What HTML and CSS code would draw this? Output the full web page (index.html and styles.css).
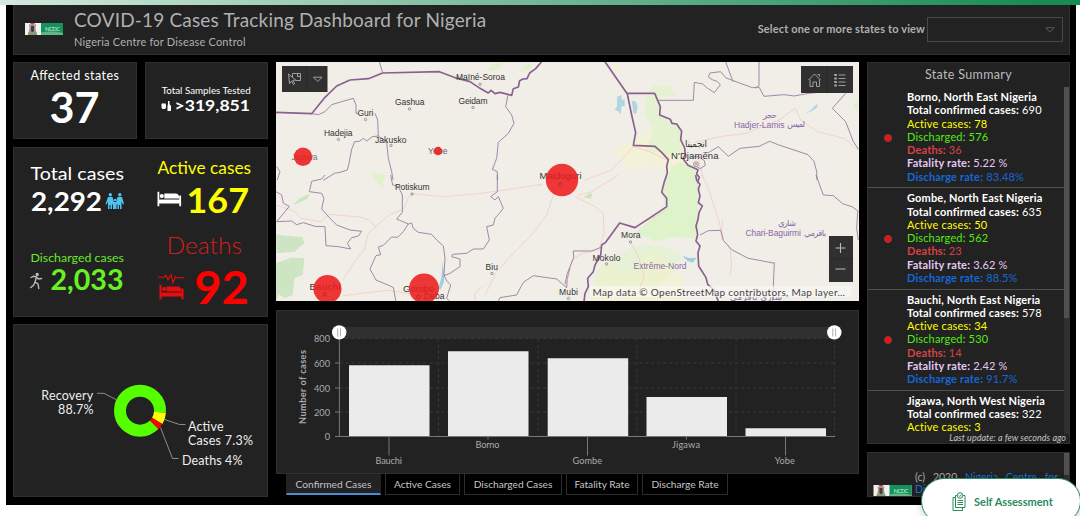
FILE: index.html
```html
<!DOCTYPE html>
<html lang="en">
<head>
<meta charset="utf-8">
<title>COVID-19 Cases Tracking Dashboard for Nigeria</title>
<link rel="stylesheet" href="styles.css">
</head>
<body>
<svg class="defs" width="0" height="0">
  <symbol id="logo" viewBox="0 0 38 12">
    <rect width="38" height="12" fill="#f4f2f0"/>
    <rect x="16" width="22" height="12" fill="#17905c"/>
    <path d="M16 9.500q11-2 22 .5v2H16z" fill="#62b68b"/>
    <path d="M4 1l2 1 1.500-1.500L9 2l2-1-.5 4 1 5H3.500l1-5z" fill="#a39590"/>
    <path d="M6 3h3v5l-1.500 1.500L6 8z" fill="#463c3b"/>
    <path d="M5.500 0h4v1.500h-4z" fill="#c44444"/>
    <path d="M3 9.500h9V12H3z" fill="#7ea070"/>
    <text x="20" y="7.500" font-size="6" font-weight="700" textLength="15" fill="#9fdcbb">NCDC</text>
  </symbol>
  <symbol id="bed" viewBox="0 0 24 15">
    <path d="M0 0h2v8h20V4h2v11h-2v-3H2v3H0zM7 2h11q4 0 4 5H7z"/><circle cx="4.500" cy="4.600" r="2.100"/>
  </symbol>
</svg>
<div class="topbar"></div>
<main class="dashboard">
  <header class="header panel">
    <svg class="brand" width="38" height="12"><use href="#logo"/></svg>
    <div class="titles">
      <h1>COVID-19 Cases Tracking Dashboard for Nigeria</h1>
      <p>Nigeria Centre for Disease Control</p>
    </div>
    <label class="picker-label">Select one or more states to view</label>
    <div class="picker"><svg width="10" height="6" viewBox="0 0 10 6"><path d="M.8.7h8.400L5 5.200z" fill="none" stroke="#5b5b5b"/></svg></div>
  </header>

  <div class="columns">
    <section class="left">
      <div class="pair">
        <div class="panel"><svg width="122" height="75" viewBox="14 63 122 75" class="stat">
          <text x="30.500" y="79.500" font-size="12.500" textLength="88.500">Affected states</text>
          <text x="49.500" y="123.300" font-size="42" textLength="50" lengthAdjust="spacingAndGlyphs" class="b">37</text>
        </svg></div>
        <div class="panel"><svg width="121" height="75" viewBox="146 63 121 75" class="stat">
          <text x="161.700" y="93.700" font-size="9.500" textLength="89" lengthAdjust="spacingAndGlyphs">Total Samples Tested</text>
          <path d="M161.500 104l1.500-1 1 1 1-1 1 1.500v3l-1 1.500h-2.500l-1-1.500zM168 101h1.500v3l1.500 2v5h-3.500v-5l.5-2z"/>
          <text x="174.500" y="111.300" font-size="15" textLength="75.500" lengthAdjust="spacingAndGlyphs" class="b">&gt;319,851</text>
        </svg></div>
      </div>
      <div class="panel"><svg width="253" height="168" viewBox="14 148 253 168" class="stat">
        <text x="30.500" y="180.300" font-size="18" textLength="93.500" lengthAdjust="spacingAndGlyphs">Total cases</text>
        <text x="31" y="211" font-size="26" textLength="71" lengthAdjust="spacingAndGlyphs" class="b">2,292</text>
        <g fill="#4fc3ee"><circle cx="110.300" cy="194.800" r="1.700"/><circle cx="119.800" cy="194.800" r="1.700"/><circle cx="115.200" cy="200" r="1.300"/>
          <path d="M108 197h4.500l1.500 5h2.200l1.300-5h4.500l2 7-1 .5-1.500-3v7.500h-1.500v-4h-1v4h-1.500v-5l-1 1v4h-3.500v-4l-1-1v5h-1.500v-4h-1v4H108V201.500l-1.500 3-1-.5z"/></g>
        <text x="157.500" y="174.300" font-size="17" fill="#ffff00" textLength="93.500" lengthAdjust="spacingAndGlyphs">Active cases</text>
        <use href="#bed" x="157.300" y="191.500" width="24" height="15"/>
        <text x="186.500" y="213" font-size="35" fill="#ffff00" textLength="62.500" lengthAdjust="spacingAndGlyphs" class="b">167</text>
        <text x="30.500" y="261.500" font-size="12" fill="#6be82c" textLength="93.500" lengthAdjust="spacingAndGlyphs">Discharged cases</text>
        <g fill="none" stroke="#bbb" stroke-width="1.400" stroke-linecap="round"><circle cx="37.200" cy="274.400" r="1" fill="#bbb"/><path d="M36.500 277l-1.500 5 3 2 .8 4.500M35 282l-1.500 3.200-2.800 2.300M31 277.500l2.500-1.300 3 .8 2 2 3-.500"/></g>
        <text x="50.500" y="290.300" font-size="28" fill="#69f222" textLength="73" lengthAdjust="spacingAndGlyphs" class="b">2,033</text>
        <text x="166.500" y="253.700" font-size="23" font-weight="300" fill="#d81c1c" textLength="75.500" lengthAdjust="spacingAndGlyphs">Deaths</text>
        <g fill="#e80c0c"><use href="#bed" x="158" y="284.500" width="27" height="15"/><path d="M158 277.200h6l2-2 2 4.500 3-5 2 8 2.500-6 1.500 1h7" fill="none" stroke="#e80c0c" stroke-width="1.100"/></g>
        <text x="194.300" y="304" font-size="46" fill="#ff0000" textLength="54.500" lengthAdjust="spacingAndGlyphs" class="b">92</text>
      </svg></div>
      <div class="panel"><svg width="253" height="171" viewBox="14 325 253 171" class="stat pie">
        <g fill="none" stroke-width="12">
          <circle cx="140" cy="410.700" r="20" pathLength="100" stroke="#55ff00" stroke-dasharray="88.700 11.300" transform="rotate(45 140 410.700)"/>
          <circle cx="140" cy="410.700" r="20" pathLength="100" stroke="#ffff00" stroke-dasharray="7.300 92.700" transform="rotate(4.300 140 410.700)"/>
          <circle cx="140" cy="410.700" r="20" pathLength="100" stroke="#ff0000" stroke-dasharray="4 96" transform="rotate(30.600 140 410.700)"/>
        </g>
        <path d="M97 393.300h7l12.500 6.500M164.500 419.500l15 5h6M160.500 427.500l12 31h6" fill="none" stroke="#999" stroke-width=".9"/>
        <text x="41.300" y="400" textLength="52">Recovery</text><text x="58" y="414" textLength="35.500">88.7%</text>
        <text x="188" y="430.700" textLength="35.500">Active</text><text x="188" y="444.500" textLength="65">Cases 7.3%</text>
        <text x="182" y="464.700" textLength="60.500">Deaths 4%</text>
      </svg></div>
    </section>

    <section class="center">
      <div class="map"><svg width="583" height="239" viewBox="276 62 583 239">
        <g transform="translate(270 55) scale(.33333)">
          <path class="green" d="M655 43l20-20h24l-12 18-30 10zM750 48l12-14 25-10-8 20zM308 358l22-6 10 10-18 13h-10z"/>
          <path class="country" d="M18 172l107 4 40-49 35-34 40-18 55-4 43-17 170-4 44 17 48 13 30 20 25 14 8-8 12 10 15-4 35 9 5-20 15-5 4-19 10-5 12-1 8-17 18-13 12-14 10-12"/>
          <path class="state" d="M328 20l10 34M125 176l20 3 20-9 20-21 30-9 35-10 8 20v25l8 2M315 175l8 20 2 48-18 2-17 13-10-8-12 9-14 1-9 23-8 42-5 20-25 8-12 1-35 22M325 243l25 17 5 50 10 40 4 25M714 120l-7 35 18 25 7 25-17 30-30 27-5 48-13 33 15 7v25M20 335l10 14-8 26"/>
        </g>
        <g transform="translate(270 175) scale(.33333)">
          <path class="forest" d="M18 178l30 4 50 5 5 18-30 25-53 5zM18 265l45-17 40 2-5 50-25 10-5 50-25 10-15-12-10 20-20-5zM68 90l22-20 28-14-6 15-25 12z"/><path class="green" d="M308 5l12-5h26l-10 38z"/>
          <path class="water" d="M518 260l5 40-1 22-12 24-4-8 8-30z"/>
          <path class="road" d="M18 90l55 18 20 22 60 10 22-22 95 8 30 10 17 20-23 20-10 45-35 45-30 50M315 156l45-38 25-9 15-5 15-35 12-13 60 6 40 3 90-8 50-7 150-22M850 60l-20 60-45 60-50 50-55 60-35 70M218 362l135-16 65 10M635 335l-20 20v23"/>
          <path class="state" d="M165 0l-10 12-30 7-7 31 37 5 7 15-7 32 25 28 20 20 40 15 35 4-10 14-20 5-13 17 10 17-37-7-37-3-3-57-30-1-35-11-20 6-15-11-45 2M18 50l17 10 5 25 18 9-38 46M362 0l6 30 17 5 12 25v52l-17 20 35 15-15 23-17 17-18-1-25 25-15 5 7 23-14 3-18 40 18 33 52 22 8 44M415 147l10-3 5 16 15 12 40 6 15 17 20 18 5 37-3 52 18-7 30-20v-23l-25-7 3-7 42-3 20-13h30l18-27-8-40 20-5 5-20 13-15 12-15-15-35-10 10-13-10 20-15V0M522 302l10 18 10 10-12 40 10 10M685 378l5-10 50-8 20-38 30-20 70 10 30 26 2-28 8-30"/>
        </g>
        <g transform="translate(565 55) scale(.33333)">
          <path class="yellow" d="M140 30l20-7 8 25h-20zM135 285l50-15 75-50 60 30 40 60-20 60-80-40-60 20z" opacity=".5"/>
          <path class="green" opacity=".75" d="M240 118l30-28 45 3 20 30-53 5 8 52 30 15 15 14 18 35-2 45-40 10-70-15 25-60-30-50 10-40z"/>
          <path class="green" d="M318 335l30-12 45 18v38h-85z"/>
          <path class="water" d="M156 125l14-5v15l9-2v22l-9-3-3 26-8-10-10-3 7-12zM200 137l12 2 6 16-5 23-8-5zM705 185l20-10 30-25v10l-20 10zM745 155l13-8-2 10z" opacity=".8"/>
          <path class="road" d="M60 375l80-30 65-70 50 15 50 25M390 262l80-18 70-8 100-40 52-36 15 35 50 35 80 20 35 30 45 23M400 310l15 60"/>
          <path class="country" d="M120 20l67 97 13 63 12 53-7 38 65 3 20 18 20 22-5 20 2 18-5 23M187 115h82l17 40-2 25 32 13 5 12 14 2 15 22-3 25 12 25 2 20-7 12 15 20 30 13-4 13 8 10-8 20"/>
          <path class="state" d="M275 136h110l3-54 25 5 15 13 20 13 18-24-10-10-14-5-12-8 5-12 32-4 15 18 20 8 60 22 20-2 15 28 60-5 30 4 45-8 40-4M482 20l22 60M582 20v72l-10 8M842 115l-40 45 40 40 23 60 15 22M415 293h15l30-18 30 29 35-24 57-6 32-15 25 10 90 30 18 20 8 30 1 26M380 306l20-1 18 12 3 14-15 10-15-9"/>
          <path class="green" d="M866 145l13-5v25l-12-5z"/>
        </g>
        <g transform="translate(565 175) scale(.33333)">
          <path class="green" d="M305 0h80l15 30-2 50 4 60-4 50-75-5-50 15-30-15-35-10 55-45 40-30-5-20-5-20z"/>
          <path class="green" opacity=".6" d="M90 290l70-50 50-30 80 0 60 30-30 60-70 50-100-20-60 20z"/>
          <path class="yellow" d="M80 340l40-80 70 30 80-70 90 90-10 68H80z" opacity=".45"/>
          <path class="forest" d="M55 67l20-14 8 4-6 14z"/><path class="water" d="M352 242l20 7 23-1-12 15-16-5z"/>
          <path class="road" d="M40 60l40-10 80-50M30 65l60 30 25 20 2 60-15 50-50 10-30 20-8 30-10 45M200 160l80-40 25-20M198 205l20 35 20 60-20 60M410 0l20 40 35 110 5 40 25 30 5 50-5 30M470 165l3-30M0 15l30 10"/>
          <path class="country" d="M305 0l-7 20-8 32 15 18v25l-30 20-65 43-46-14-42 58-12 8-3 30-17 30-5 20-17 20 2 25-10 20-5 43M392 0l3 16 10 12-5 15 5 20-5 20 12 10-10 20-3 20-6 20 5 25-5 20 12 15-6 20 2 40 22 35 5 20 17 15 15 35"/>
          <path class="state" d="M405 180l25-13 38-1 7 30 25 28 50 26 75 14 3-1-5 115M753 0l22 60 30 2 28 24 30 10 18 14M878 110l-3 50 5 35M110 216l-30 12-55 0 1 20-20 50-6 30"/>
        </g>
        <g fill="#f1eee8" stroke="#777" stroke-width=".7"><circle cx="365.500" cy="119.500" r="1.200"/><circle cx="409.500" cy="109" r="1.200"/><circle cx="473" cy="107.500" r="1.200"/><circle cx="480" cy="84.300" r="1.200"/><circle cx="338.500" cy="139.500" r="1.200"/><circle cx="391" cy="145.500" r="1.200"/><circle cx="412" cy="194" r="1.200"/><circle cx="492" cy="273.500" r="1.200"/><circle cx="630.500" cy="242" r="1.200"/><circle cx="606.500" cy="264" r="1.200"/><circle cx="696" cy="164.300" r="2.500"/><circle cx="696" cy="164.300" r=".8"/><circle cx="568.500" cy="298.500" r="1.200"/></g>
        <g class="places">
          <text x="456" y="80.200" textLength="49">Maïné-Soroa</text><text x="395" y="105" textLength="29.500">Gashua</text><text x="458.500" y="103.700" textLength="29">Geidam</text>
          <text x="357.500" y="115.500" textLength="16">Guri</text><text x="324" y="136" textLength="28.500">Hadejia</text><text x="375" y="142.500" textLength="31.500">Jakusko</text>
          <text x="395" y="190" textLength="34.500">Potiskum</text><text x="485.500" y="269.500" textLength="12.500">Biu</text><text x="621" y="238" textLength="19.500">Mora</text><text x="592.500" y="260.500" textLength="28">Mokolo</text>
          <text x="559" y="295" textLength="19">Mubi</text><text x="671" y="158.500" font-size="9.500" textLength="47.500">N'Djaména</text><text x="685" y="146.500" font-size="9" textLength="22">انجمينا</text>
          <text x="291.500" y="159.500" fill="#777" textLength="26">Jigawa</text><text x="428" y="154" fill="#666" textLength="19.500">Yobe</text><text x="539.500" y="178.500" font-size="9.500" textLength="42">Maiduguri</text><text x="309.500" y="289.500" font-size="9.500" textLength="31">Bauchi</text><text x="403" y="291.500" font-size="9.500" textLength="31.500">Gombe</text><text x="424" y="299" textLength="20.500">Deba</text>
          <g fill="#8968a5"><text x="734" y="127.500" textLength="50.500">Hadjer-Lamis</text><text x="787" y="127" textLength="18">لميس</text><text x="763" y="118" textLength="14">حجر</text><text x="745.500" y="236.200" textLength="55.500">Chari-Baguirmi</text><text x="804" y="236" textLength="22">باقرمي</text><text x="778" y="226" textLength="18">شاري</text><text x="633.500" y="268.500" textLength="53">Extrême-Nord</text><text x="730" y="300" textLength="52">شاري باقرمي</text></g>
        </g>
        <g class="marks"><circle cx="303" cy="156.700" r="9.200"/><circle cx="438" cy="151" r="4.200"/><circle cx="562" cy="180" r="16.200"/><circle cx="327.500" cy="289" r="14"/><circle cx="424" cy="288.500" r="15"/></g>
        <g fill="none" stroke="#b52525" stroke-width=".8"><circle cx="324.500" cy="294.500" r="1.600"/><circle cx="418.500" cy="297" r="1.800"/><circle cx="560.500" cy="184.500" r="1.800"/></g>
        <rect x="590" y="286" width="261" height="11" fill="#f8f6f2" opacity=".72"/>
        <text x="592.500" y="295.500" class="credit" textLength="252.500">Map data © OpenStreetMap contributors, Map layer…</text>
        <g fill="#303030"><rect x="282" y="66" width="45.500" height="26"/><rect x="801" y="66" width="52" height="27"/><rect x="829" y="236" width="24" height="46"/></g>
        <path d="M306.500 66v26M827 66v27M829 259h24" stroke="#292929"/>
        <g fill="none" stroke="#aaa" stroke-width=".9"><path d="M292.500 77v-3.500h8v7h-5M297.500 73.500v3h3M288.500 74l1 9.500 2-2.500 2 3.500 1.200-.7-2-3.300 3-.5zM313.500 77.200h8.500l-4.200 4.300z"/>
          <path d="M808.500 80l6-6 6 6M810 79.500v7h3v-4.500h3.500v4.500h3v-7M817.500 74.500h2v2M838.500 75h7M838.500 78.500h7M838.500 82h7M838.500 85.500h7"/><path d="M834.300 75h2.500M834.300 78.500h2.500M834.300 82h2.500M834.300 85.500h2.500" stroke-width="2"/>
          <path d="M835.500 248h10M840.500 243v10M835.500 269h10" stroke="#bbb" stroke-width="1.100"/></g>
      </svg></div>
      <div class="chart panel"><svg width="581" height="162" viewBox="277 311 581 162">
        <rect x="339.300" y="327" width="495" height="11.500" fill="#303030"/>
        <path d="M339.300 338.500h495M339.300 363h495M339.300 388h495M339.300 412h495M438.500 338.500v98M538 338.500v98M637 338.500v98M736 338.500v98M834.500 338.500v98" stroke="#383838" stroke-dasharray="3 3" fill="none"/>
        <g fill="#ebebeb"><path d="M349 365.300h80.500v71H349zM448 351.200h80.500v85.100H448zM547.700 358.300h80.500v78h-80.500zM646.500 397h80.500v39.300h-80.500zM745.500 428.200h80.500v8.100h-80.500z"/></g>
        <path d="M339.400 338.500v98M335 363h4.400M335 388h4.400M335 412h4.400M335 436.500h500M389 436v19.500M488 436v3.500M587.500 436v19.500M686.500 436v3.500M785.500 436v19.500" stroke="#777" fill="none"/>
        <g class="handle"><circle cx="339.200" cy="332.400" r="7.200"/><circle cx="834.300" cy="332.400" r="7.200"/><path d="M337.700 328.500v8M340.500 328.500v8M832.800 328.500v8M835.600 328.500v8" stroke="#999" stroke-width=".8"/></g>
        <g class="axis"><g text-anchor="end"><text x="330" y="342">800</text><text x="330" y="366.500">600</text><text x="330" y="391.500">400</text><text x="330" y="416">200</text><text x="330" y="440">0</text></g>
          <text x="375.500" y="464.300" textLength="26.500">Bauchi</text><text x="475.500" y="448.300" textLength="24">Borno</text><text x="572.500" y="464.300" textLength="29.500">Gombe</text><text x="672" y="448.300" textLength="28">Jigawa</text><text x="774.800" y="464.300" textLength="20">Yobe</text>
          <text transform="translate(306 424) rotate(-90)" class="b" textLength="74">Number of cases</text></g>
      </svg></div>
      <nav class="tabs"><span class="tab active w1">Confirmed Cases</span><span class="tab w2">Active Cases</span><span class="tab w3">Discharged Cases</span><span class="tab w4">Fatality Rate</span><span class="tab w5">Discharge Rate</span></nav>
    </section>

    <aside class="right">
      <div class="summary panel">
        <h2>State Summary</h2>
        <div class="scroller">
          <ul class="states">
            <li><i class="dot"></i><div><b>Borno, North East Nigeria</b><p><b>Total confirmed cases:</b> 690</p><p class="yellow-t">Active cases: 78</p><p class="green-t">Discharged: 576</p><p class="red-t"><b>Deaths:</b> 36</p><p class="pink-t"><b>Fatality rate:</b> 5.22 %</p><p class="blue-t"><b>Discharge rate:</b> 83.48%</p></div></li>
            <li><i class="dot"></i><div><b>Gombe, North East Nigeria</b><p><b>Total confirmed cases:</b> 635</p><p class="yellow-t">Active cases: 50</p><p class="green-t">Discharged: 562</p><p class="red-t"><b>Deaths:</b> 23</p><p class="pink-t"><b>Fatality rate:</b> 3.62 %</p><p class="blue-t"><b>Discharge rate:</b> 88.5%</p></div></li>
            <li><i class="dot"></i><div><b>Bauchi, North East Nigeria</b><p><b>Total confirmed cases:</b> 578</p><p class="yellow-t">Active cases: 34</p><p class="green-t">Discharged: 530</p><p class="red-t"><b>Deaths:</b> 14</p><p class="pink-t"><b>Fatality rate:</b> 2.42 %</p><p class="blue-t"><b>Discharge rate:</b> 91.7%</p></div></li>
            <li><div><b>Jigawa, North West Nigeria</b><p><b>Total confirmed cases:</b> 322</p><p class="yellow-t">Active cases: 3</p></div></li>
          </ul>
          <div class="track"><div class="thumb"></div></div>
        </div>
        <p class="updated">Last update: a few seconds ago</p>
      </div>
      <div class="about panel">
        <svg class="about-logo" width="39" height="12"><use href="#logo"/></svg>
        <p class="about-text">(c) 2020 <a>Nigeria Centre for Disease Control</a></p>
        <div class="track"><div class="thumb short"></div></div>
      </div>
    </aside>
  </div>
</main>
<button class="assess"><svg width="14" height="19" viewBox="0 0 14 19"><g fill="none" stroke="#2c8a60" stroke-width="1"><path d="M3.500 3.500h2M8.500 3.500h4.500v12H3.500v-12M3.500 5.500H1v13h9.500v-3M5.500 8.500h5.500M5.500 10.500h5.500M5.500 12.500h5.500"/><circle cx="8" cy="3.500" r="2.800" fill="#fff"/><path d="M6.800 3.500l1 1 1.700-2"/></g></svg><span>Self Assessment</span></button>
</body>
</html>
```
FILE: styles.css
```css
* { box-sizing: border-box; }
body { margin: 0; width: 1080px; height: 516px; overflow: hidden; background: #fff; font-family: Lato, "Open Sans", sans-serif; color: #fff; }
h1, h2, p, ul { margin: 0; padding: 0; font-weight: 400; }
svg { display: block; }
.defs { position: absolute; }
.topbar { height: 5px; background: linear-gradient(90deg, #d3e9dd 0, #76b999 48%, #178b54 97%); }
.dashboard { width: 1070px; height: 500px; margin-left: 6px; padding: 0 6px 0 7px; background: #000; }
.panel { background: #222; border: 1px solid #303030; overflow: hidden; }
.header { display: flex; height: 50px; border-top: 0; color: #b0b0b0; }
.brand { margin: 18px 0 0 11px; }
.titles { margin-left: 11px; flex: 1; }
.titles h1 { font-size: 19px; line-height: 24px; margin-top: 3px; letter-spacing: .18px; white-space: nowrap; }
.titles p { font-size: 11px; line-height: 16px; margin-top: 2px; letter-spacing: .18px; }
.picker-label { font-size: 11px; font-weight: 700; margin: 17px 2px 0 0; letter-spacing: .15px; white-space: nowrap; }
.picker { display: flex; align-items: center; justify-content: flex-end; width: 136px; height: 25px; margin: 12px 6px 0 0; padding-right: 7px; border: 1px solid #484848; }
.columns { display: grid; grid-template-columns: 255px 583px 203px; gap: 8px; margin-top: 7px; }
.left { display: grid; grid-template-rows: 77px 170px 173px; row-gap: 7.5px; }
.pair { display: grid; grid-template-columns: 124px 123px; gap: 8px; }
.stat { fill: #fff; }
.b { font-weight: 700; }
.pie { font-size: 12.5px; fill: #eee; }
.map { height: 239px; background: #f1eee8; overflow: hidden; }
.green { fill: #dff3cb; }
.forest { fill: #cde5c2; }
.yellow { fill: #f5f4c8; }
.water { fill: #9fd0df; }
.country { fill: none; stroke: #896090; stroke-width: 5; stroke-linejoin: round; }
.state { fill: none; stroke: #93799b; stroke-width: 2.600; stroke-linejoin: round; }
.road { fill: none; stroke: #f3b7ad; stroke-width: 1.500; }
.marks { fill: #ed1c1c; opacity: .87; }
.places { font-family: "Liberation Sans", "DejaVu Sans", sans-serif; font-size: 8.500px; fill: #333; }
.credit { font-size: 10px; fill: #444; }
.chart { height: 164px; margin-top: 9px; }
.axis { font-size: 9.200px; fill: #aaa; }
.handle { fill: #fff; }
.tabs { display: flex; gap: 4px; padding-left: 10px; height: 21px; }
.tab { height: 21px; border: 1px solid #2c2c2c; border-top: 0; color: #c4c4c4; font-size: 10.200px; line-height: 20px; text-align: center; white-space: nowrap; }
.tab.active { background: #222; border-color: #222; border-bottom: 2px solid #4b8bd0; }
.w1 { width: 95px; } .w2 { width: 75px; } .w3 { width: 98px; } .w4 { width: 72px; } .w5 { width: 86px; }
.right { display: grid; grid-template-rows: 382px 45px; row-gap: 8px; }
.summary { position: relative; }
.summary h2 { height: 24px; font-size: 12.500px; line-height: 24px; text-align: center; color: #bbb; letter-spacing: .33px; }
.scroller { display: flex; height: 347px; overflow: hidden; }
.states { flex: 1; list-style: none; font-size: 11px; line-height: 13.250px; letter-spacing: .17px; white-space: nowrap; }
.states li { display: flex; height: 101.300px; padding: 3px 0 0 39px; border-bottom: 1px solid #505050; position: relative; }
.states li:last-child { border-bottom: 0; }
.dot { position: absolute; left: 15.500px; top: 46.500px; width: 8px; height: 8px; border-radius: 50%; background: #ed1111; border: 1px solid #8c4040; }
.yellow-t { color: #ff0; } .green-t { color: #52ed0e; } .red-t { color: #d64343; } .pink-t { color: #e6c8f5; } .blue-t { color: #1468d6; }
.track { width: 5px; background: #303030; }
.thumb { height: 231px; background: #505050; }
.thumb.short { height: 22px; }
.updated { position: absolute; right: 3px; bottom: -1px; font-size: 9px; line-height: 12px; letter-spacing: .03px; font-style: italic; color: #c4c4c4; white-space: nowrap; }
.about { display: flex; }
.about-logo { margin: 32px 0 0 5px; flex: none; }
.about-text { width: 143px; margin: 18px 6px 0 3px; font-size: 10.500px; line-height: 12px; text-align: justify; color: #aaa; }
.about-text a { color: #1673cc; }
.assess { position: absolute; left: 921px; top: 478px; width: 160px; height: 46px; display: flex; align-items: center; gap: 8px; padding: 0 0 0 30px; border: 1px solid #2c8a60; border-radius: 24px; background: #fff; box-shadow: 0 2px 10px #0003; color: #2c8a60; font: 700 11px Lato, sans-serif; }
```
